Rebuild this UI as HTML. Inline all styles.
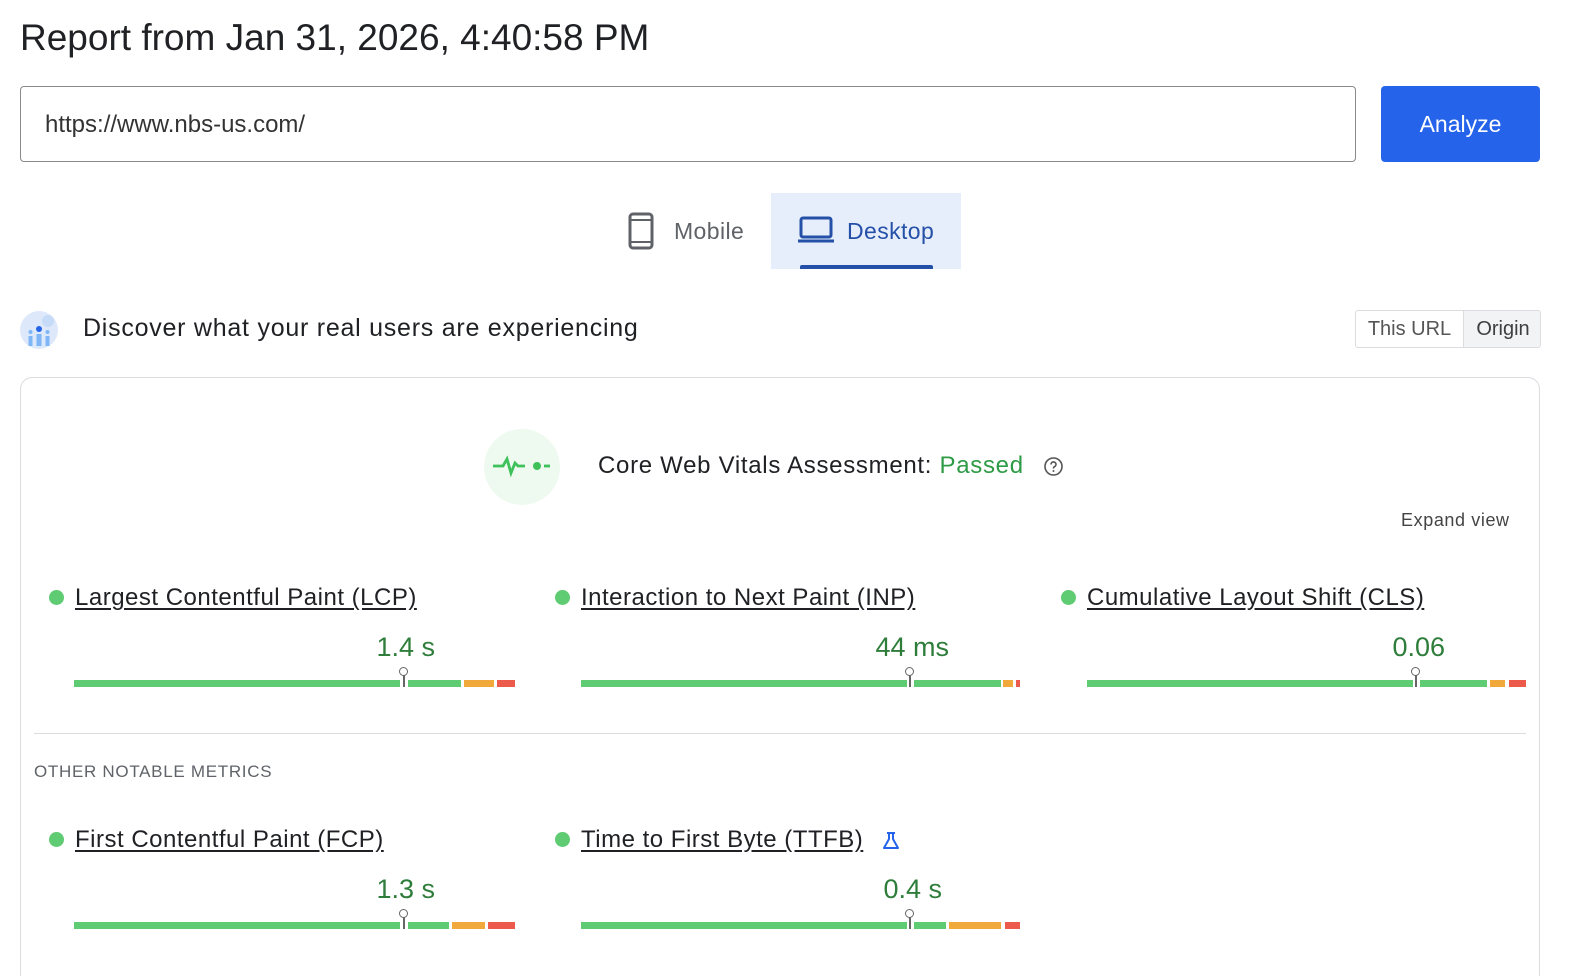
<!DOCTYPE html>
<html style="overflow:hidden;width:1584px;height:976px"><head><meta charset="utf-8"><style>
*{margin:0;padding:0;box-sizing:border-box}
body{width:1584px;height:976px;overflow:hidden;background:#fff;font-family:"Liberation Sans",sans-serif;color:#202124;position:relative}
.a{position:absolute}
.bar{position:absolute;height:7px}
.g{background:#5fcb72}.o{background:#f2a93b}.r{background:#eb5a4b}
.lnk{font-size:24px;letter-spacing:.5px;color:#202124;text-decoration:underline;text-underline-offset:3px;white-space:nowrap}
.dot{width:15px;height:15px;border-radius:50%;background:#5fcb72}
.val{font-size:27px;color:#2e7d3a;text-align:right;width:200px}
.pin{position:absolute;width:2px;background:#666}
.pc{position:absolute;width:9px;height:9px;border:1.5px solid #666;border-radius:50%;background:#fff}
</style></head><body>
<div class="a" style="left:20px;top:17px;font-size:37px;color:#202124">Report from Jan 31, 2026, 4:40:58 PM</div>
<div class="a" style="left:20px;top:86px;width:1336px;height:76px;border:1px solid #8a8a8a;border-radius:4px;font-size:24px;padding:24px 0 0 24px;color:#333">https://www.nbs-us.com/</div>
<div class="a" style="left:1381px;top:86px;width:159px;height:76px;background:#2563eb;border-radius:4px;color:#fff;font-size:23px;text-align:center;line-height:76px">Analyze</div>

<svg class="a" style="left:628px;top:212px" width="28" height="38" viewBox="0 0 28 38"><rect x="2" y="2" width="22" height="34" rx="3" fill="none" stroke="#5f6368" stroke-width="3"/><line x1="3" y1="8" x2="23" y2="8" stroke="#5f6368" stroke-width="2"/><line x1="3" y1="30" x2="23" y2="30" stroke="#5f6368" stroke-width="2"/></svg>
<div class="a" style="left:674px;top:218px;font-size:23px;letter-spacing:.4px;color:#5f6368">Mobile</div>
<div class="a" style="left:771px;top:193px;width:190px;height:76px;background:#e7eefb"></div>
<svg class="a" style="left:797px;top:216px" width="38" height="28" viewBox="0 0 38 28"><rect x="4" y="2" width="30" height="19" rx="2" fill="none" stroke="#2450a8" stroke-width="3"/><line x1="1" y1="25" x2="37" y2="25" stroke="#2450a8" stroke-width="3"/></svg>
<div class="a" style="left:847px;top:218px;font-size:23px;letter-spacing:.4px;color:#2450a8">Desktop</div>
<div class="a" style="left:800px;top:265px;width:133px;height:4px;background:#2450a8;border-radius:2px 2px 0 0"></div>

<svg class="a" style="left:19px;top:310px" width="40" height="40" viewBox="0 0 40 40"><circle cx="20" cy="20" r="19" fill="#dde9fb"/><circle cx="29" cy="11" r="6" fill="#c6dbf7"/><circle cx="20" cy="19" r="3" fill="#2563eb"/><rect x="17.5" y="24" width="5" height="12" fill="#7fb6f5"/><rect x="9.5" y="26" width="4" height="10" fill="#7fb6f5"/><rect x="26.5" y="26" width="4" height="10" fill="#7fb6f5"/><circle cx="11.5" cy="22" r="2" fill="#7fb6f5"/><circle cx="28.5" cy="22" r="2" fill="#7fb6f5"/></svg>
<div class="a" style="left:83px;top:314px;font-size:25px;letter-spacing:.75px">Discover what your real users are experiencing</div>
<div class="a" style="left:1355px;top:310px;width:186px;height:38px;border:1px solid #dadce0;border-radius:3px;overflow:hidden;font-size:20px;color:#555">
<div class="a" style="left:0;top:0;width:107px;height:36px;text-align:center;line-height:36px">This URL</div>
<div class="a" style="left:107px;top:0;width:79px;height:36px;background:#f1f3f4;border-left:1px solid #dadce0;text-align:center;line-height:36px;color:#3c4043">Origin</div></div>

<div class="a" style="left:20px;top:377px;width:1520px;height:599px;border:1px solid #dadce0;border-bottom:none;border-radius:12px 12px 0 0"></div>
<svg class="a" style="left:483px;top:428px" width="78" height="78" viewBox="0 0 78 78"><circle cx="39" cy="39" r="38" fill="#eefaf0"/><path d="M10 38h10l4-7 4 14 4-10 3 3h7" fill="none" stroke="#3ec05a" stroke-width="2.8"/><circle cx="54" cy="38" r="4" fill="#3ec05a"/><line x1="61" y1="38" x2="67" y2="38" stroke="#3ec05a" stroke-width="2.8"/></svg>
<div class="a" style="left:598px;top:452px;font-size:24px;letter-spacing:.7px;white-space:nowrap">Core Web Vitals Assessment: <span style="color:#2e9b46">Passed</span></div>
<svg class="a" style="left:1043px;top:456px" width="21" height="21" viewBox="0 0 21 21"><circle cx="10.5" cy="10.5" r="8.5" fill="none" stroke="#555" stroke-width="1.6"/><path d="M8 8.5a2.5 2.5 0 1 1 3.5 2.2c-.8.4-1 .9-1 1.8" fill="none" stroke="#555" stroke-width="1.6"/><circle cx="10.5" cy="15" r="1" fill="#555"/></svg>
<div class="a" style="left:1401px;top:510px;font-size:18px;letter-spacing:.6px;color:#444">Expand view</div>

<div class="a dot" style="left:49px;top:590px"></div><div class="a lnk" style="left:75px;top:584px">Largest Contentful Paint (LCP)</div>
<div class="a val" style="left:235px;top:632px">1.4 s</div>
<div class="bar g" style="left:74px;top:680px;width:326px"></div><div class="bar g" style="left:408px;top:680px;width:53px"></div><div class="bar o" style="left:464px;top:680px;width:30px"></div><div class="bar r" style="left:497px;top:680px;width:18px"></div>
<div class="pin" style="left:403px;top:674px;height:13px"></div><div class="pc" style="left:399px;top:667px"></div>

<div class="a dot" style="left:555px;top:590px"></div><div class="a lnk" style="left:581px;top:584px">Interaction to Next Paint (INP)</div>
<div class="a val" style="left:749px;top:632px">44 ms</div>
<div class="bar g" style="left:581px;top:680px;width:326px"></div><div class="bar g" style="left:914px;top:680px;width:87px"></div><div class="bar o" style="left:1003px;top:680px;width:10px"></div><div class="bar r" style="left:1016px;top:680px;width:4px"></div>
<div class="pin" style="left:909px;top:674px;height:13px"></div><div class="pc" style="left:905px;top:667px"></div>

<div class="a dot" style="left:1061px;top:590px"></div><div class="a lnk" style="left:1087px;top:584px">Cumulative Layout Shift (CLS)</div>
<div class="a val" style="left:1245px;top:632px">0.06</div>
<div class="bar g" style="left:1087px;top:680px;width:326px"></div><div class="bar g" style="left:1420px;top:680px;width:67px"></div><div class="bar o" style="left:1490px;top:680px;width:15px"></div><div class="bar r" style="left:1509px;top:680px;width:17px"></div>
<div class="pin" style="left:1415px;top:674px;height:13px"></div><div class="pc" style="left:1411px;top:667px"></div>

<div class="a" style="left:34px;top:733px;width:1492px;height:1px;background:#dadce0"></div>
<div class="a" style="left:34px;top:762px;font-size:17px;color:#5f6368;letter-spacing:.7px">OTHER NOTABLE METRICS</div>

<div class="a dot" style="left:49px;top:832px"></div><div class="a lnk" style="left:75px;top:826px">First Contentful Paint (FCP)</div>
<div class="a val" style="left:235px;top:874px">1.3 s</div>
<div class="bar g" style="left:74px;top:922px;width:326px"></div><div class="bar g" style="left:408px;top:922px;width:41px"></div><div class="bar o" style="left:452px;top:922px;width:33px"></div><div class="bar r" style="left:488px;top:922px;width:27px"></div>
<div class="pin" style="left:403px;top:916px;height:13px"></div><div class="pc" style="left:399px;top:909px"></div>

<div class="a dot" style="left:555px;top:832px"></div><div class="a lnk" style="left:581px;top:826px">Time to First Byte (TTFB)</div>
<svg class="a" style="left:881px;top:831px" width="20" height="20" viewBox="0 0 20 20"><path d="M6 2h8M8 2v6L3 17h14L12 8V2" fill="none" stroke="#2563eb" stroke-width="2" stroke-linejoin="round"/></svg>
<div class="a val" style="left:742px;top:874px">0.4 s</div>
<div class="bar g" style="left:581px;top:922px;width:326px"></div><div class="bar g" style="left:914px;top:922px;width:32px"></div><div class="bar o" style="left:949px;top:922px;width:52px"></div><div class="bar r" style="left:1005px;top:922px;width:15px"></div>
<div class="pin" style="left:909px;top:916px;height:13px"></div><div class="pc" style="left:905px;top:909px"></div>
</body></html>
